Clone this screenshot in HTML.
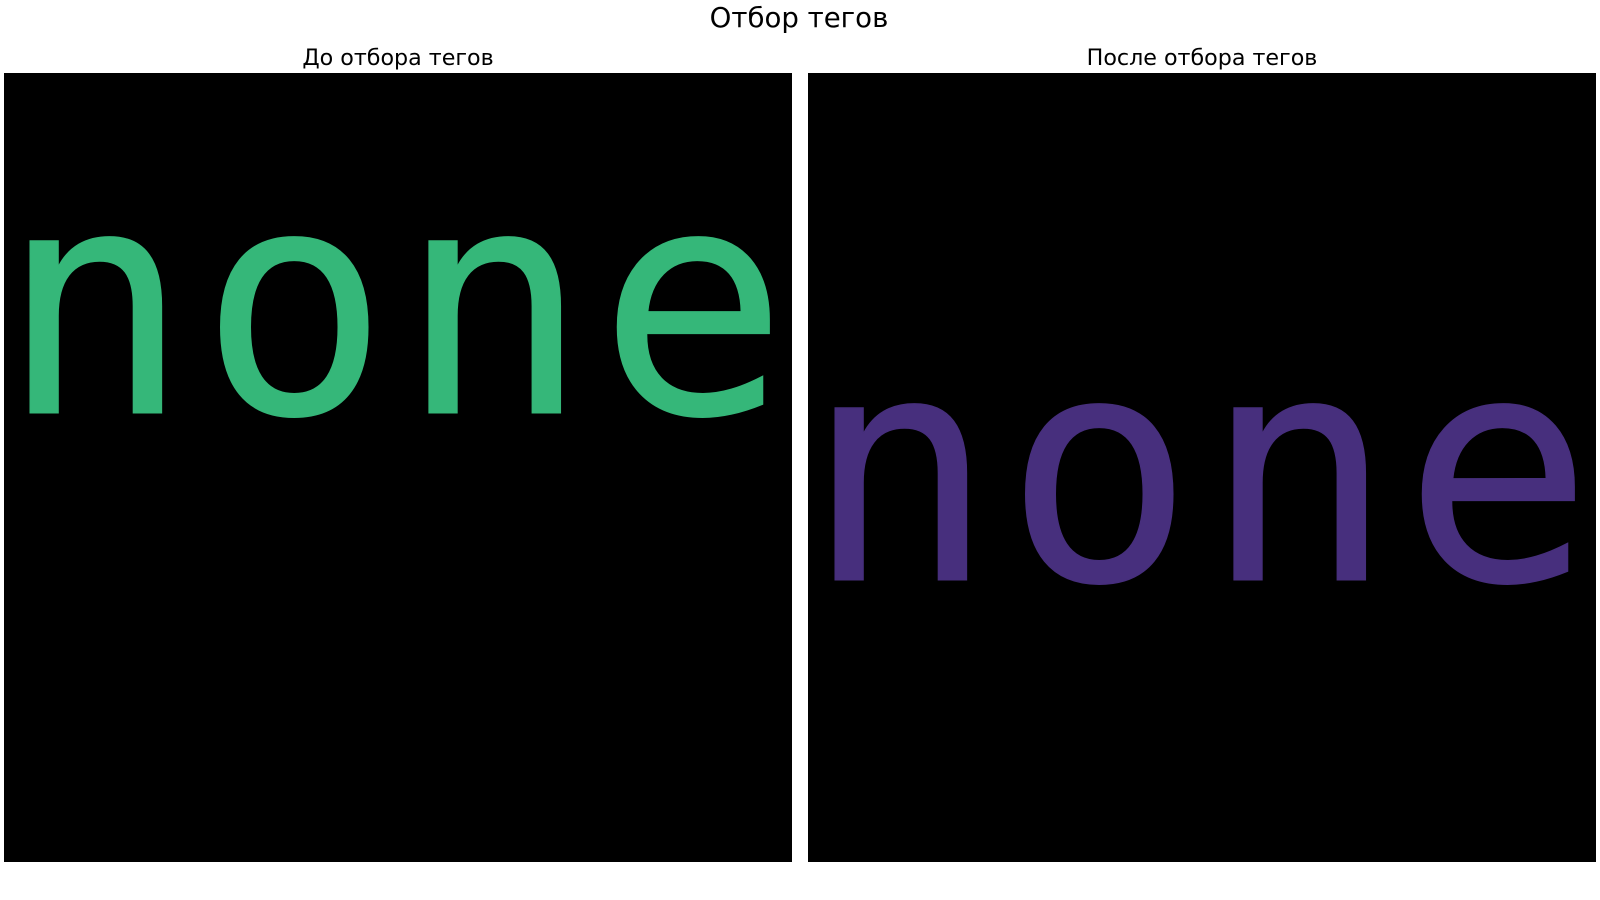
<!DOCTYPE html>
<html><head><meta charset="utf-8"><style>
html,body{margin:0;padding:0;background:#fff;width:1600px;height:900px;overflow:hidden}
</style></head><body>
<svg width="1600" height="900" xmlns="http://www.w3.org/2000/svg">
<rect width="1600" height="900" fill="#fff"/>
<text x="799" y="27" font-family="DejaVu Sans, sans-serif" font-size="27.6" text-anchor="middle" fill="#000">Отбор тегов</text>
<text x="398" y="65" font-family="DejaVu Sans, sans-serif" font-size="22.2" text-anchor="middle" fill="#000">До отбора тегов</text>
<text x="1202" y="65" font-family="DejaVu Sans, sans-serif" font-size="22.2" text-anchor="middle" fill="#000">После отбора тегов</text>
<rect x="4" y="73" width="788" height="789" fill="#000"/>
<rect x="808" y="73" width="788" height="789" fill="#000"/>
<clipPath id="c1"><rect x="4" y="73" width="788" height="789"/></clipPath>
<clipPath id="c2"><rect x="808" y="73" width="788" height="789"/></clipPath>
<text clip-path="url(#c1)" x="0" y="413" font-family="DejaVu Sans Mono, monospace" font-size="315" textLength="788" lengthAdjust="spacing" fill="#35b779" stroke="#35b779" stroke-width="1">none</text>
<text clip-path="url(#c2)" x="805" y="580" font-family="DejaVu Sans Mono, monospace" font-size="315" textLength="788" lengthAdjust="spacing" fill="#472f7d" stroke="#472f7d" stroke-width="1">none</text>
</svg>
</body></html>
